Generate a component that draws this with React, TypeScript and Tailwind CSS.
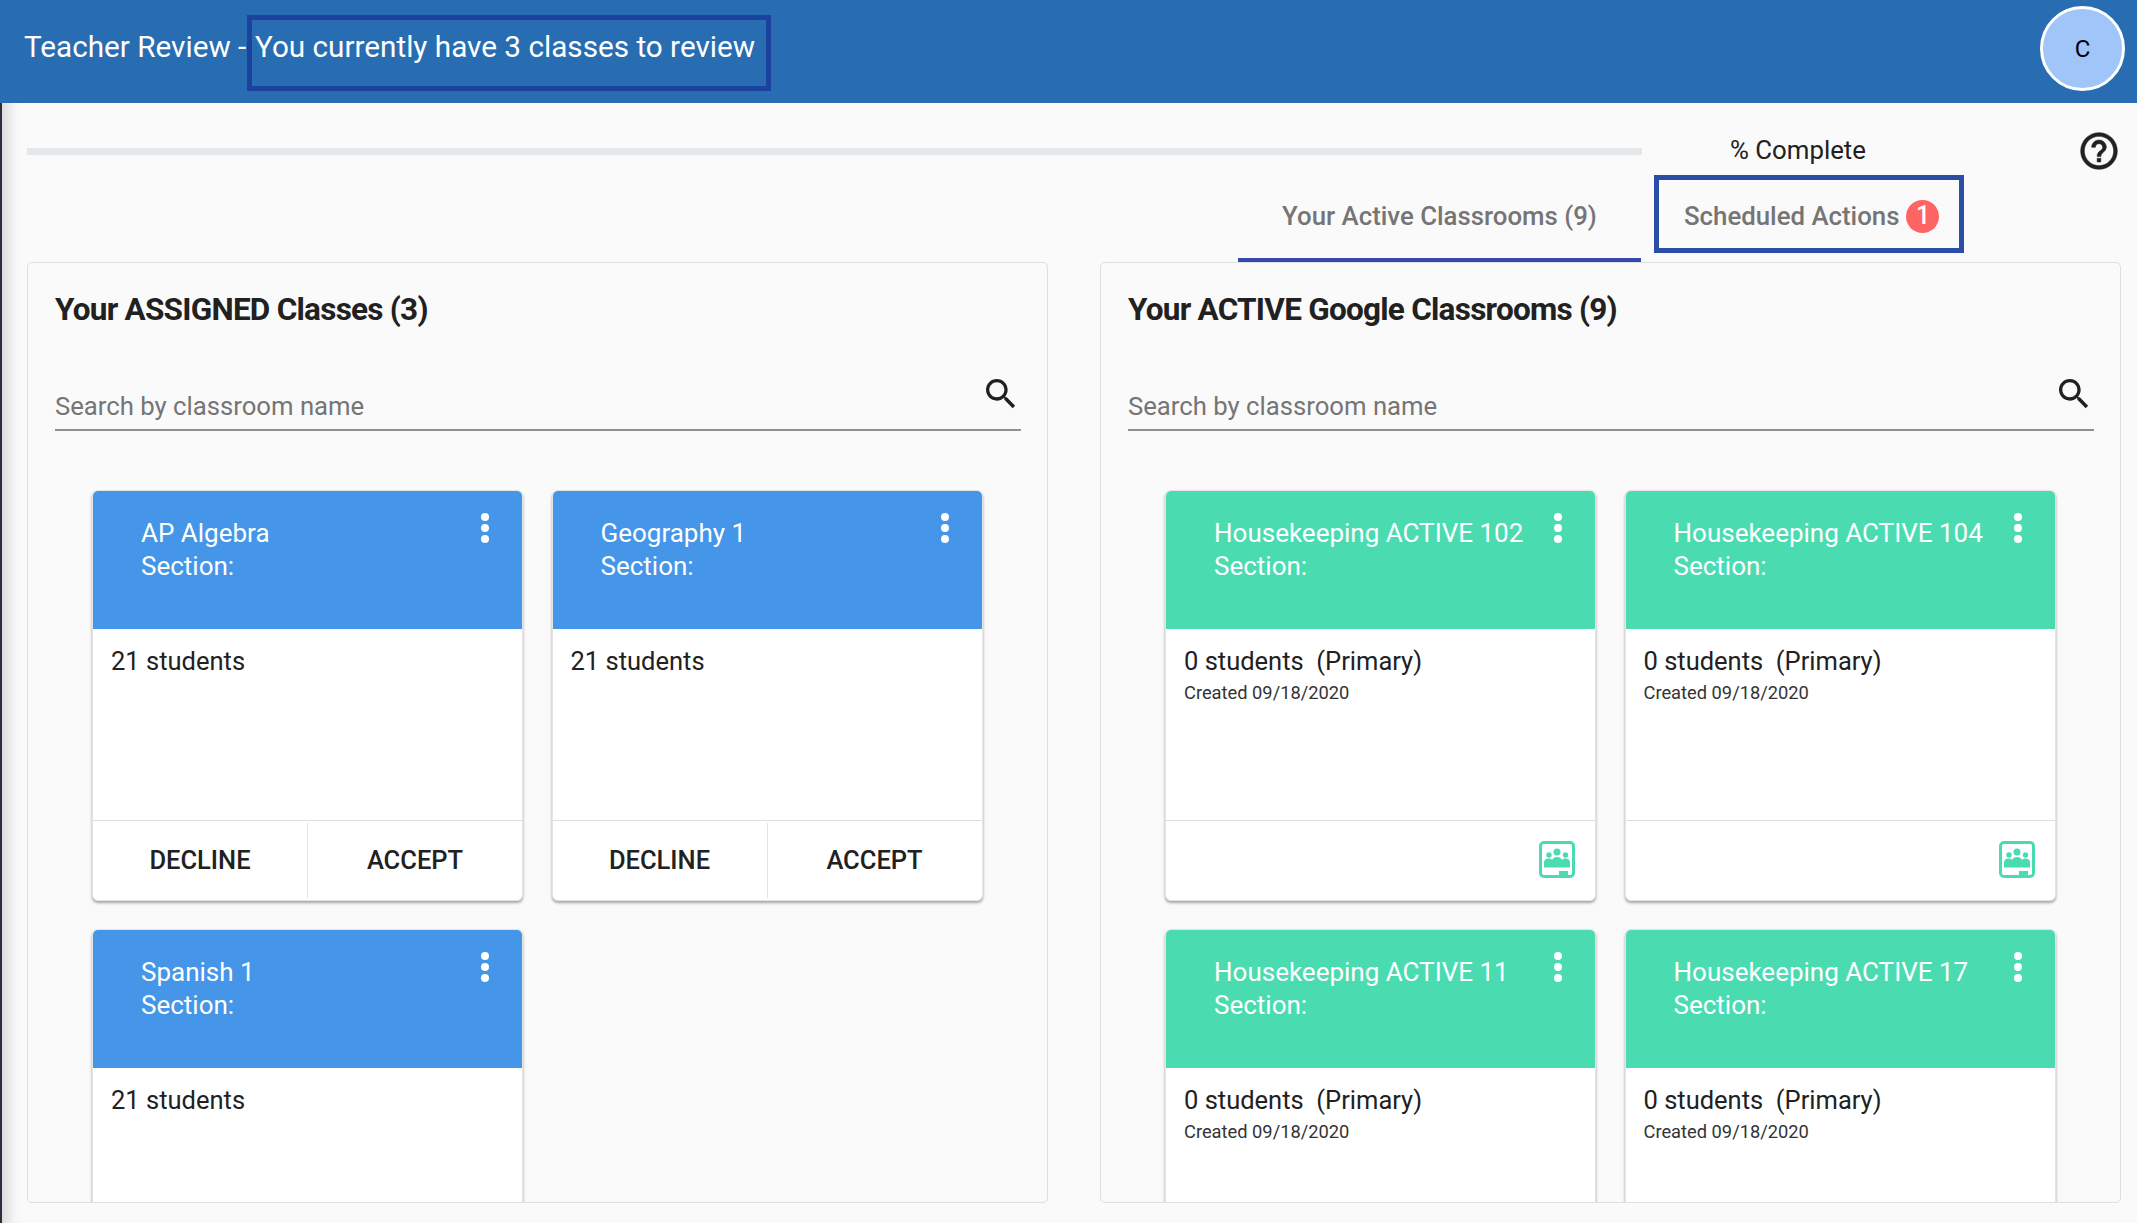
import React from "react";

const SEARCH =
  "M15.5 14h-.79l-.28-.27C15.41 12.59 16 11.11 16 9.5 16 5.91 13.09 3 9.5 3S3 5.91 3 9.5 5.91 16 9.5 16c1.61 0 3.09-.59 4.23-1.57l.27.28v.79l5 4.99L20.49 19l-4.99-5zm-6 0C7.01 14 5 11.99 5 9.5S7.01 5 9.5 5 14 7.01 14 9.5 11.99 14 9.5 14z";
const HELP =
  "M11 18h2v-2h-2v2zm1-16C6.48 2 2 6.48 2 12s4.48 10 10 10 10-4.48 10-10S17.52 2 12 2zm0 18c-4.41 0-8-3.59-8-8s3.59-8 8-8 8 3.59 8 8-3.59 8-8 8zm0-14c-2.21 0-4 1.79-4 4h2c0-1.1.9-2 2-2s2 .9 2 2c0 2-3 1.75-3 5h2c0-2.25 3-2.5 3-5 0-2.21-1.79-4-4-4z";

function Kebab() {
  return (
    <div className="flex flex-col gap-[3px] mt-[22px] mr-[33px] shrink-0">
      <span className="w-[8px] h-[8px] rounded-full bg-white" />
      <span className="w-[8px] h-[8px] rounded-full bg-white" />
      <span className="w-[8px] h-[8px] rounded-full bg-white" />
    </div>
  );
}

function ClassroomIcon() {
  return (
    <svg width="37" height="37" viewBox="0 0 37 37" className="text-[#4adcb0]">
      <rect x="1.5" y="1.5" width="33" height="34" rx="3.5" fill="none" stroke="currentColor" strokeWidth="3" />
      <g fill="currentColor">
        <circle cx="18" cy="11" r="3.5" />
        <circle cx="10" cy="14" r="2.7" />
        <circle cx="26.5" cy="14" r="2.7" />
        <path d="M5 26.500v-5c0-2.600 2-4 4.400-4 1.600 0 2.800.5 3.600 1.400.9-2 2.700-3 5-3 2.400 0 4.200 1 5.100 3 .8-.9 2-1.400 3.500-1.400 2.400 0 4.400 1.400 4.400 4v5z" />
        <rect x="20" y="30" width="9" height="5" />
      </g>
    </svg>
  );
}

function Card({ title, color, active, clipped }: { title: string; color: string; active?: boolean; clipped?: boolean }) {
  return (
    <div className="w-[431px] h-[411px] bg-white rounded-[6px] border border-[#e4e4e4] shadow-[0_2px_3px_rgba(0,0,0,0.35)] overflow-hidden flex flex-col shrink-0">
      <div className={`h-[138px] flex justify-between shrink-0 ${color}`}>
        <div className="pl-[48px] pt-[26px] text-white text-[26px] leading-[33px] whitespace-nowrap">
          <div>{title}</div>
          <div>Section:</div>
        </div>
        <Kebab />
      </div>
      <div className="h-[191px] pl-[18px] pt-[16px] text-[#212121] shrink-0">
        <div className="text-[25.500px] leading-[32px] whitespace-pre">
          {active ? "0 students  (Primary)" : "21 students"}
        </div>
        {active && <div className="text-[18.300px] leading-[24px] mt-[4px] text-[#333]">Created 09/18/2020</div>}
      </div>
      {clipped ? null : active ? (
        <div className="flex-1 border-t border-[#dedede] flex justify-end items-center pr-[19px] pb-[3px]">
          <ClassroomIcon />
        </div>
      ) : (
        <div className="flex-1 border-t border-[#dedede] flex text-[#212121] text-[25.500px] font-medium">
          <div className="w-[215px] flex items-center justify-center border-r border-[#e2e2e2] my-[2px] pb-[1px]">DECLINE</div>
          <div className="flex-1 flex items-center justify-center pb-[1px]">ACCEPT</div>
        </div>
      )}
    </div>
  );
}

function Panel({ heading, children }: { heading: string; children: React.ReactNode }) {
  return (
    <div className="w-[1021px] h-[941px] border border-[#dfdfdf] rounded-[5px] overflow-hidden pl-[27px] pr-[26px] pt-[1px] shrink-0">
      <h2 className="mt-[26px] h-[40px] leading-[40px] text-[31.500px] font-bold text-[#212121] whitespace-nowrap tracking-[-0.75px]">
        {heading}
      </h2>
      <div className="mt-[39px] h-[62px] border-b-2 border-[#8f8f8f] flex justify-between">
        <span className="self-end pb-[8px] text-[25.700px] leading-[30px] text-[#757575]">Search by classroom name</span>
        <svg viewBox="0 0 24 24" className="w-[40px] h-[40px] mt-[5px] text-[#212121]" fill="currentColor">
          <path d={SEARCH} />
        </svg>
      </div>
      <div className="mt-[59px] pl-[37px] grid grid-cols-[431px_431px] gap-x-[28.500px] gap-y-[27.500px]">{children}</div>
    </div>
  );
}

export default function App() {
  return (
    <div className="w-[2137px] h-[1223px] overflow-hidden flex flex-col bg-[#fafafa] font-['Roboto',sans-serif]">
      <header className="h-[103px] shrink-0 bg-[#286db2] flex items-start pl-[24px] pr-[12px] text-white text-[29.700px]">
        <div className="w-[223px] shrink-0 whitespace-nowrap pt-[29px] leading-[36px]">Teacher Review -</div>
        <div className="mt-[15px] w-[524px] h-[76px] border-[5px] border-[#1a429e] pl-[3px] pt-[9px] leading-[36px] whitespace-nowrap">
          You currently have 3 classes to review
        </div>
        <div className="ml-auto mt-[6px] w-[85px] h-[85px] rounded-full bg-[#a0c5f8] border-[3px] border-white flex items-center justify-center text-black text-[24px]">
          C
        </div>
      </header>

      <main className="flex-1 border-l-2 border-[#2a3040] pl-[25px] shadow-[inset_18px_0_14px_-12px_rgba(0,0,0,0.14)]">
        <div className="h-[72px] pt-[22px] flex items-center">
          <div className="w-[1615px] h-[7px] bg-[#e5e8eb] mt-[3px]" />
          <div className="w-[312px] text-center text-[25.800px] text-[#212121]">% Complete</div>
          <svg viewBox="0 0 24 24" className="w-[44px] h-[44px] ml-[123px] mt-[2px] text-[#212121]" fill="currentColor" stroke="currentColor" strokeWidth="0.3">
            <path d={HELP} />
          </svg>
        </div>
        <div className="h-[87px] flex items-start pl-[1211px]">
          <div className="w-[403px] h-[87px] border-b-[4px] border-[#3949ab] flex items-center justify-center pb-[1px] text-[25.800px] font-medium text-[#757575] whitespace-nowrap">
            Your Active Classrooms (9)
          </div>
          <div className="ml-[13px] w-[310px] h-[78px] border-[5px] border-[#2a4ea6] flex items-center pl-[25px] pt-[4px] text-[25.800px] font-medium text-[#757575] whitespace-nowrap">
            Scheduled Actions
            <span className="ml-[7px] w-[33px] h-[33px] rounded-full bg-[#ff6464] text-white text-[25px] flex items-center justify-center">
              1
            </span>
          </div>
        </div>
        <div className="flex gap-[52px]">
          <Panel heading="Your ASSIGNED Classes (3)">
            <Card title="AP Algebra" color="bg-[#4596e8]" />
            <Card title="Geography 1" color="bg-[#4596e8]" />
            <Card title="Spanish 1" color="bg-[#4596e8]" clipped />
          </Panel>
          <Panel heading="Your ACTIVE Google Classrooms (9)">
            <Card title="Housekeeping ACTIVE 102" color="bg-[#4adcb0]" active />
            <Card title="Housekeeping ACTIVE 104" color="bg-[#4adcb0]" active />
            <Card title="Housekeeping ACTIVE 11" color="bg-[#4adcb0]" active clipped />
            <Card title="Housekeeping ACTIVE 17" color="bg-[#4adcb0]" active clipped />
          </Panel>
        </div>
      </main>
    </div>
  );
}
